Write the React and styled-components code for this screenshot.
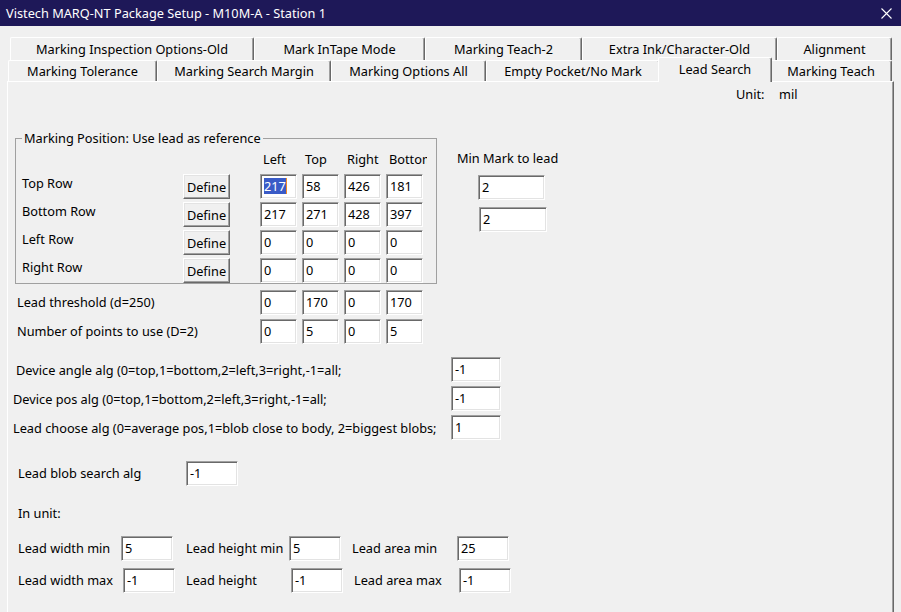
import React from "react";
import styled, { createGlobalStyle } from "styled-components";

const GlobalStyle = createGlobalStyle`
  html, body {
    margin: 0;
    padding: 0;
    background: #f0f0f0;
  }
`;

const backTabs = [
  { label: "Marking Inspection Options-Old", w: 244 },
  { label: "Mark InTape Mode", w: 171 },
  { label: "Marking Teach-2", w: 157 },
  { label: "Extra Ink/Character-Old", w: 195 },
  { label: "Alignment", w: 115 },
];

const frontTabs = [
  { label: "Marking Tolerance", w: 149 },
  { label: "Marking Search Margin", w: 174 },
  { label: "Marking Options All", w: 155 },
  { label: "Empty Pocket/No Mark", w: 174 },
  { label: "Lead Search", w: 110, active: true },
  { label: "Marking Teach", w: 122 },
];

const positionRows = [
  { label: "Top Row", values: ["217", "58", "426", "181"] },
  { label: "Bottom Row", values: ["217", "271", "428", "397"] },
  { label: "Left Row", values: ["0", "0", "0", "0"] },
  { label: "Right Row", values: ["0", "0", "0", "0"] },
];

const algRows = [
  { label: "Device angle alg (0=top,1=bottom,2=left,3=right,-1=all;", value: "-1", indent: 8 },
  { label: "Device pos alg (0=top,1=bottom,2=left,3=right,-1=all;", value: "-1", indent: 5 },
  { label: "Lead choose alg (0=average pos,1=blob close to body, 2=biggest blobs;", value: "1", indent: 5 },
];

const CloseIcon = () => (
  <svg width="11" height="11" viewBox="0 0 11 11">
    <path d="M0.5 0.5 L10.5 10.5 M10.5 0.5 L0.5 10.5" stroke="#fff" strokeWidth="1.1" fill="none" />
  </svg>
);

const App = () => {
  return (
    <>
      <GlobalStyle />
      <Window>
        <TitleBar>
          <span>Vistech MARQ-NT Package Setup - M10M-A - Station 1</span>
          <CloseIcon />
        </TitleBar>

        <TabStrip>
          <TabRow $indent={10} $h={23}>
            {backTabs.map((t) => (
              <Tab key={t.label} $w={t.w}>{t.label}</Tab>
            ))}
          </TabRow>
          <TabRow $indent={8} $h={21}>
            {frontTabs.map((t) => (
              <Tab key={t.label} $w={t.w} $active={t.active}>{t.label}</Tab>
            ))}
          </TabRow>
        </TabStrip>

        <Panel>
          <UnitRow>
            <UnitLabel>Unit:</UnitLabel>
            <span>mil</span>
          </UnitRow>

          <GroupArea>
            <GroupBox>
              <legend>Marking Position: Use lead as reference</legend>
              <PosGrid>
                <HeadSpacer />
                <HeadCell>Left</HeadCell>
                <HeadCell>Top</HeadCell>
                <HeadCell>Right</HeadCell>
                <HeadCell>Bottom</HeadCell>
                {positionRows.map((row, ri) => (
                  <React.Fragment key={row.label}>
                    <RowLabel>{row.label}</RowLabel>
                    <Button>Define</Button>
                    <span />
                    {row.values.map((v, i) => (
                      <TextBox key={i} $w={37}>
                        {ri === 0 && i === 0 ? <Selected>{v}</Selected> : v}
                      </TextBox>
                    ))}
                  </React.Fragment>
                ))}
              </PosGrid>
            </GroupBox>

            <MinMark>
              <span>Min Mark to lead</span>
              <TextBox $w={67} $ml={21} $mt={9}>2</TextBox>
              <TextBox $w={68} $ml={22} $mt={7}>2</TextBox>
            </MinMark>
          </GroupArea>

          <ThresholdGrid>
            <FieldLabel>Lead threshold (d=250)</FieldLabel>
            {["0", "170", "0", "170"].map((v, i) => (
              <TextBox key={i} $w={37}>{v}</TextBox>
            ))}
            <FieldLabel>Number of points to use (D=2)</FieldLabel>
            {["0", "5", "0", "5"].map((v, i) => (
              <TextBox key={i} $w={37}>{v}</TextBox>
            ))}
          </ThresholdGrid>

          <AlgList>
            {algRows.map((r) => (
              <AlgRow key={r.label}>
                <AlgLabel $indent={r.indent}>{r.label}</AlgLabel>
                <TextBox $w={50}>{r.value}</TextBox>
              </AlgRow>
            ))}
          </AlgList>

          <BlobRow>
            <FieldLabel>Lead blob search alg</FieldLabel>
            <TextBox $w={52}>-1</TextBox>
          </BlobRow>

          <SectionNote>In unit:</SectionNote>

          <MeasureGrid>
            <FieldLabel>Lead width min</FieldLabel>
            <TextBox $w={52}>5</TextBox>
            <FieldLabel>Lead height min</FieldLabel>
            <TextBox $w={52}>5</TextBox>
            <FieldLabel>Lead area min</FieldLabel>
            <TextBox $w={52}>25</TextBox>

            <FieldLabel>Lead width max</FieldLabel>
            <TextBox $w={52} $ml={2}>-1</TextBox>
            <FieldLabel>Lead height</FieldLabel>
            <TextBox $w={52} $ml={2}>-1</TextBox>
            <FieldLabel $ml={2}>Lead area max</FieldLabel>
            <TextBox $w={52} $ml={2}>-1</TextBox>
          </MeasureGrid>
        </Panel>
      </Window>
    </>
  );
};

export default App;

// window frame
const Window = styled.div`
  width: 901px;
  height: 612px;
  display: flex;
  flex-direction: column;
  overflow: hidden;
  background: #f0f0f0;
  font-family: "Noto Sans", "Liberation Sans", sans-serif;
  font-size: 12.75px;
  line-height: 16px;
  color: #000;
`;

const TitleBar = styled.div`
  flex: none;
  height: 26px;
  box-sizing: border-box;
  padding: 0 9px 0 6px;
  display: flex;
  align-items: center;
  justify-content: space-between;
  background: #1e1858;
  color: #fff;
  font-size: 12.75px;
  svg {
    display: block;
  }
`;

// tabs
const TabStrip = styled.div`
  flex: none;
  margin-top: 11px;
`;

const TabRow = styled.div`
  display: flex;
  height: ${(p) => p.$h}px;
  padding-left: ${(p) => p.$indent}px;
`;

const Tab = styled.div`
  flex: none;
  box-sizing: border-box;
  width: ${(p) => (p.$active ? p.$w + 4 : p.$w)}px;
  display: flex;
  align-items: center;
  justify-content: center;
  white-space: nowrap;
  background: #f0f0f0;
  border-top: 1px solid #fff;
  border-left: 1px solid #fff;
  border-right: 1px solid #696969;
  border-radius: 2px 2px 0 0;
  box-shadow: inset -1px 0 0 #a0a0a0;
  ${(p) =>
    p.$active &&
    `
    position: relative;
    z-index: 1;
    margin: -3px -2px -1px;
    padding-bottom: 3px;
  `}
`;

// tab page
const Panel = styled.div`
  flex: 1;
  margin-left: 7px;
  width: 887px;
  box-sizing: border-box;
  display: flex;
  flex-direction: column;
  align-items: flex-start;
  border-top: 1px solid #fff;
  border-left: 1px solid #fff;
  border-right: 1px solid #696969;
  box-shadow: inset -1px 0 0 #a0a0a0;
`;

const UnitRow = styled.div`
  display: flex;
  margin: 4px 0 0 728px;
`;

const UnitLabel = styled.span`
  width: 43px;
`;

const GroupArea = styled.div`
  display: flex;
  align-items: flex-start;
  margin-top: 28px;
`;

const GroupBox = styled.fieldset`
  margin: 0 0 0 7px;
  padding: 0 0 0 6px;
  width: 422px;
  box-sizing: border-box;
  border: 1px solid #a0a0a0;
  legend {
    padding: 0 2px;
    margin: 0;
  }
`;

const PosGrid = styled.div`
  display: grid;
  grid-template-columns: 161px 47px 30px repeat(4, 42px);
  grid-template-rows: 20px repeat(4, 25px);
  row-gap: 3px;
  margin-top: 5px;
`;

const HeadSpacer = styled.div`
  grid-column: span 3;
`;

const HeadCell = styled.div`
  width: 41px;
  padding-left: 3px;
  box-sizing: border-box;
  overflow: hidden;
  white-space: nowrap;
`;

const RowLabel = styled.div`
  align-self: start;
  padding-top: 1px;
`;

const Button = styled.div`
  box-sizing: border-box;
  width: 47px;
  height: 25px;
  display: flex;
  align-items: center;
  justify-content: center;
  background: #f0f0f0;
  border: 1px solid;
  border-color: #fff #696969 #696969 #fff;
  box-shadow: inset -1px -1px 0 #a0a0a0, inset 1px 1px 0 #e3e3e3;
`;

const TextBox = styled.div`
  box-sizing: border-box;
  width: ${(p) => p.$w}px;
  height: 25px;
  margin-left: ${(p) => p.$ml || 0}px;
  margin-top: ${(p) => p.$mt || 0}px;
  padding: 0 0 2px 3px;
  display: flex;
  align-items: center;
  background: #fff;
  border: 1px solid;
  border-color: #a0a0a0 #fff #fff #a0a0a0;
  box-shadow: inset 1px 1px 0 #696969, inset -1px -1px 0 #e3e3e3;
  white-space: nowrap;
`;

const Selected = styled.span`
  background: #3a5bc7;
  color: #fff;
  border-right: 1px solid #f08a24;
`;

const MinMark = styled.div`
  display: flex;
  flex-direction: column;
  align-items: flex-start;
  margin: 20px 0 0 20px;
`;

const FieldLabel = styled.div`
  align-self: center;
  padding-bottom: 2px;
  margin-left: ${(p) => p.$ml || 0}px;
  white-space: nowrap;
`;

const ThresholdGrid = styled.div`
  display: grid;
  grid-template-columns: 243px repeat(4, 42px);
  grid-auto-rows: 25px;
  row-gap: 4px;
  margin: 6px 0 0 9px;
`;

const AlgList = styled.div`
  display: flex;
  flex-direction: column;
  gap: 4px;
  margin-top: 13px;
`;

const AlgRow = styled.div`
  display: grid;
  grid-template-columns: 443px 50px;
  align-items: center;
`;

const AlgLabel = styled.div`
  padding-left: ${(p) => p.$indent}px;
  white-space: nowrap;
`;

const BlobRow = styled.div`
  display: grid;
  grid-template-columns: 168px 52px;
  margin: 21px 0 0 10px;
`;

const SectionNote = styled.div`
  margin: 19px 0 0 10px;
`;

const MeasureGrid = styled.div`
  display: grid;
  grid-template-columns: 103px 65px 103px 63px 105px 52px;
  grid-auto-rows: 25px;
  row-gap: 7px;
  margin: 15px 0 0 10px;
`;
